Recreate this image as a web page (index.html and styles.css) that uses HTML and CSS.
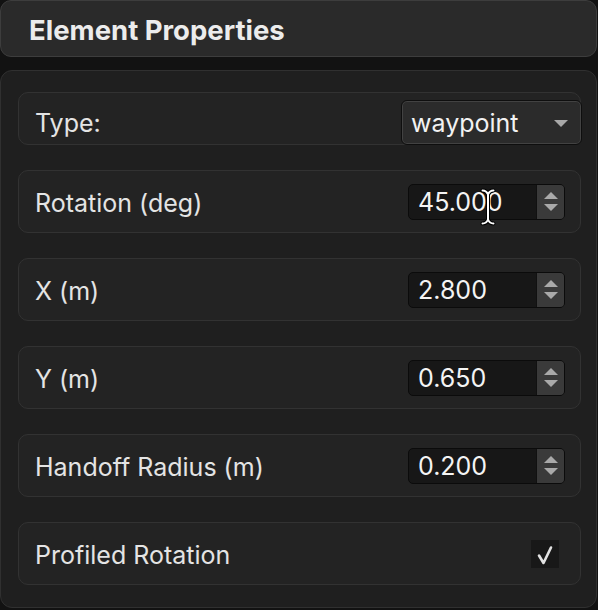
FILE: index.html
```html
<!DOCTYPE html>
<html>
<head>
<meta charset="utf-8">
<link rel="stylesheet" href="styles.css">
</head>
<body>
<header class="header">
  <h1 class="title">Element Properties</h1>
</header>
<main class="panel">
  <div class="row row-type">
    <span class="label">Type:</span>
    <div class="select">
      <span class="select-text">waypoint</span>
      <span class="select-arrow"></span>
    </div>
  </div>
  <div class="row">
    <span class="label">Rotation (deg)</span>
    <div class="spin">
      <span class="spin-value">45.000</span>
      <span class="stepper"><span class="tri-up"></span><span class="tri-down"></span></span>
      <svg class="ibeam" width="16" height="38" viewBox="0 0 16 38">
        <path d="M2.5 2.5 C6 2.5 7 4 8 6.5 C9 4 10 2.5 13.5 2.5 M8 6.5 L8 31.5 M2.5 35.5 C6 35.5 7 34 8 31.5 C9 34 10 35.5 13.5 35.5" fill="none" stroke="#000" stroke-width="4" stroke-linecap="round"/>
        <path d="M2.5 2.5 C6 2.5 7 4 8 6.5 C9 4 10 2.5 13.5 2.5 M8 6.5 L8 31.5 M2.5 35.5 C6 35.5 7 34 8 31.5 C9 34 10 35.5 13.5 35.5" fill="none" stroke="#fff" stroke-width="2" stroke-linecap="round"/>
      </svg>
    </div>
  </div>
  <div class="row">
    <span class="label">X (m)</span>
    <div class="spin">
      <span class="spin-value">2.800</span>
      <span class="stepper"><span class="tri-up"></span><span class="tri-down"></span></span>
    </div>
  </div>
  <div class="row">
    <span class="label">Y (m)</span>
    <div class="spin">
      <span class="spin-value">0.650</span>
      <span class="stepper"><span class="tri-up"></span><span class="tri-down"></span></span>
    </div>
  </div>
  <div class="row">
    <span class="label">Handoff Radius (m)</span>
    <div class="spin">
      <span class="spin-value">0.200</span>
      <span class="stepper"><span class="tri-up"></span><span class="tri-down"></span></span>
    </div>
  </div>
  <div class="row row-check">
    <span class="label">Profiled Rotation</span>
    <span class="checkbox">
      <svg width="28" height="28" viewBox="0 0 28 28">
        <path d="M8 15.5 L12.5 23 L20 7.5" fill="none" stroke="#e2e2e2" stroke-width="2.6" stroke-linecap="round" stroke-linejoin="round"/>
      </svg>
    </span>
  </div>
</main>
</body>
</html>
```

FILE: styles.css
```css
* { box-sizing: border-box; }
html, body { margin: 0; padding: 0; }
body {
  background: #121212;
  width: 598px;
  height: 610px;
  overflow: hidden;
  font-family: Inter, "Noto Sans", sans-serif;
  color: #e6e6e6;
}
.header {
  width: 597px;
  height: 57px;
  background: #2a2a2a;
  border: 1.5px solid #3d3d3d;
  border-radius: 11px;
  display: flex;
  align-items: center;
  padding-left: 28px;
  padding-top: 2px;
}
.title {
  margin: 0;
  font-size: 27.5px;
  font-weight: 700;
  color: #ececec;
  letter-spacing: 0;
}
.panel {
  margin-top: 13px;
  width: 597px;
  height: 538px;
  background: #1f1f1f;
  border: 1px solid #303030;
  border-radius: 12px;
  padding: 21px 17px 0 17px;
  display: flex;
  flex-direction: column;
  gap: 25px;
}
.row {
  height: 63px;
  width: 563px;
  flex: none;
  background: #232323;
  border: 1.5px solid #323232;
  border-radius: 10px;
  display: flex;
  align-items: center;
  justify-content: space-between;
  padding: 0 15px 0 16px;
}
.label {
  font-size: 25px;
  color: #e4e4e4;
  padding-top: 3px;
}
.row-type {
  height: 53px;
  align-items: flex-end;
  padding: 0 0 0 16px;
}
.row-type .label {
  align-self: center;
  padding-top: 8px;
}
.select {
  width: 181px;
  height: 45px;
  margin-right: -2px;
  margin-bottom: -1px;
  background: #2b2b2b;
  border: 1.5px solid #0e0e0e;
  box-shadow: inset 0 0 0 1px #424242;
  border-radius: 6px;
  display: flex;
  align-items: center;
  justify-content: space-between;
  padding: 1px 13px 0 9px;
}
.select-text {
  font-size: 25px;
  color: #f2f2f2;
}
.select-arrow {
  width: 0;
  height: 0;
  border-left: 7.5px solid transparent;
  border-right: 7.5px solid transparent;
  border-top: 7px solid #a8a8a8;
}
.spin {
  position: relative;
  width: 157px;
  height: 36px;
  background: #171717;
  border: 1.5px solid #0b0b0b;
  border-radius: 5px;
  display: flex;
  align-items: stretch;
  justify-content: space-between;
}
.spin-value {
  font-size: 25px;
  color: #f4f4f4;
  padding-left: 9px;
  padding-top: 1px;
  display: flex;
  align-items: center;
}
.stepper {
  width: 28px;
  background: #3a3a3a;
  border-left: 1px solid #111;
  border-radius: 0 4px 4px 0;
  display: flex;
  flex-direction: column;
  align-items: center;
  justify-content: center;
  gap: 5px;
}
.tri-up {
  width: 0; height: 0;
  border-left: 7.5px solid transparent;
  border-right: 7.5px solid transparent;
  border-bottom: 7px solid #a9a9a9;
}
.tri-down {
  width: 0; height: 0;
  border-left: 7.5px solid transparent;
  border-right: 7.5px solid transparent;
  border-top: 7px solid #a9a9a9;
}
.ibeam {
  position: absolute;
  left: 71px;
  top: 3px;
}
.row-check {
  padding-right: 21px;
}
.checkbox {
  width: 28px;
  height: 28px;
  background: #181818;
  display: flex;
}
```
